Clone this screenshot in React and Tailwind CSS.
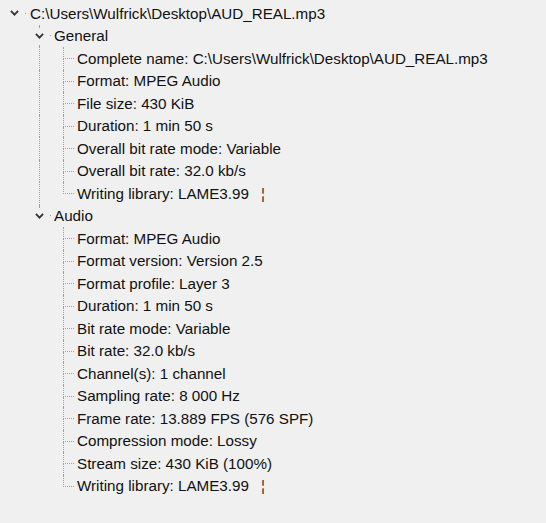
import React from "react";

const tree = {
  label: "C:\\Users\\Wulfrick\\Desktop\\AUD_REAL.mp3",
  children: [
    {
      label: "General",
      children: [
        { label: "Complete name: C:\\Users\\Wulfrick\\Desktop\\AUD_REAL.mp3" },
        { label: "Format: MPEG Audio" },
        { label: "File size: 430 KiB" },
        { label: "Duration: 1 min 50 s" },
        { label: "Overall bit rate mode: Variable" },
        { label: "Overall bit rate: 32.0 kb/s" },
        { label: "Writing library: LAME3.99", tail: true },
      ],
    },
    {
      label: "Audio",
      children: [
        { label: "Format: MPEG Audio" },
        { label: "Format version: Version 2.5" },
        { label: "Format profile: Layer 3" },
        { label: "Duration: 1 min 50 s" },
        { label: "Bit rate mode: Variable" },
        { label: "Bit rate: 32.0 kb/s" },
        { label: "Channel(s): 1 channel" },
        { label: "Sampling rate: 8 000 Hz" },
        { label: "Frame rate: 13.889 FPS (576 SPF)" },
        { label: "Compression mode: Lossy" },
        { label: "Stream size: 430 KiB (100%)" },
        { label: "Writing library: LAME3.99", tail: true },
      ],
    },
  ],
};

const colW = ["w-[25px]", "w-[24px]", "w-[25px]"];
const ownW = ["w-[30px]", "w-[29px]", "w-[28px]"];

function Chevron() {
  return (
    <svg width="9" height="6" viewBox="0 0 9 6" className="block">
      <polyline
        points="0.9,0.9 4.5,4.6 8.1,0.9"
        fill="none"
        stroke="#333333"
        strokeWidth="1.8"
      />
    </svg>
  );
}

function Label({ node }) {
  return (
    <span className="whitespace-pre text-[#111]">
      {node.label}
      {node.tail && (
        <span className="ml-[12px] text-[#3a2a2a]">¦</span>
      )}
    </span>
  );
}

function Row({ node, depth, isLast, guides }) {
  const expandable = !!node.children;
  return (
    <>
      <div className="flex h-[22.5px] items-stretch">
        {guides.map((g, i) => (
          <div key={i} className={`${colW[i]} shrink-0`}>
            {g && (
              <div className="ml-[14px] h-full border-l border-dotted border-[#a0a0a0]" />
            )}
          </div>
        ))}
        {expandable ? (
          <div className={`${ownW[depth]} shrink-0 flex flex-col`}>
            <div
              className={`h-[2px] ml-[14px] ${
                depth > 0 ? "border-l border-dotted border-[#a0a0a0]" : ""
              }`}
            />
            <div className="flex-1 flex items-center">
              <div className="ml-[10px] w-[9px]">
                <Chevron />
              </div>
              <div className="ml-[6px] w-[1px] h-[1px] bg-[#a0a0a0]" />
            </div>
            <div
              className={`h-[2px] ml-[14px] ${
                depth > 0 && !isLast
                  ? "border-l border-dotted border-[#a0a0a0]"
                  : ""
              }`}
            />
          </div>
        ) : (
          <div className={`${ownW[depth]} shrink-0 flex flex-col`}>
            <div className="h-[12px] ml-[14px] mr-[3px] border-l border-b border-dotted border-[#a0a0a0]" />
            <div
              className={`flex-1 ml-[14px] ${
                !isLast ? "border-l border-dotted border-[#a0a0a0]" : ""
              }`}
            />
          </div>
        )}
        <div className="flex items-center">
          <Label node={node} />
        </div>
      </div>
      {expandable &&
        node.children.map((c, i) => (
          <Row
            key={i}
            node={c}
            depth={depth + 1}
            isLast={i === node.children.length - 1}
            guides={[...guides, depth > 0 && !isLast]}
          />
        ))}
    </>
  );
}

export default function App() {
  return (
    <div
      className="min-h-screen w-full bg-[#f0f0f0] pt-[2px] text-[15.2px] leading-none"
      style={{ fontFamily: '"Liberation Sans", Arial, sans-serif' }}
    >
      <Row node={tree} depth={0} isLast={true} guides={[]} />
    </div>
  );
}
